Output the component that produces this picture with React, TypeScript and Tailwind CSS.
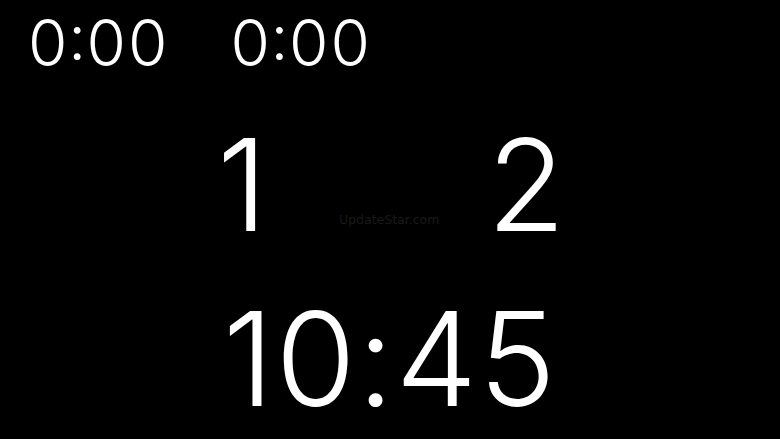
import React from 'react';

const font = { fontFamily: 'Inter, "Noto Sans", sans-serif' };

export default function App() {
  return (
    <div
      className="w-[780px] h-[439px] bg-black text-white overflow-hidden flex flex-col relative"
      style={font}
    >
      {/* timers */}
      <div className="flex items-start gap-[61px] pl-[27px] pt-[11px] h-[80px]">
        <span className="text-[64px] leading-none font-light tabular-nums">0:00</span>
        <span className="text-[64px] leading-none font-light tabular-nums">0:00</span>
      </div>

      {/* scores */}
      <div className="flex items-start h-[214px] pt-[41px]">
        <span className="text-[128px] leading-none font-light ml-[217px] w-[270px]">1</span>
        <span className="text-[128px] leading-none font-light">2</span>
      </div>

      {/* clock */}
      <div className="flex justify-center">
        <span className="text-[130px] leading-none font-light tracking-[1.5px]">10:45</span>
      </div>

      <span
        className="absolute left-[339px] top-[211px] text-[12.5px] text-[#1a1a1a]"
        style={{ fontFamily: '"DejaVu Sans", sans-serif' }}
      >
        UpdateStar.com
      </span>
    </div>
  );
}
